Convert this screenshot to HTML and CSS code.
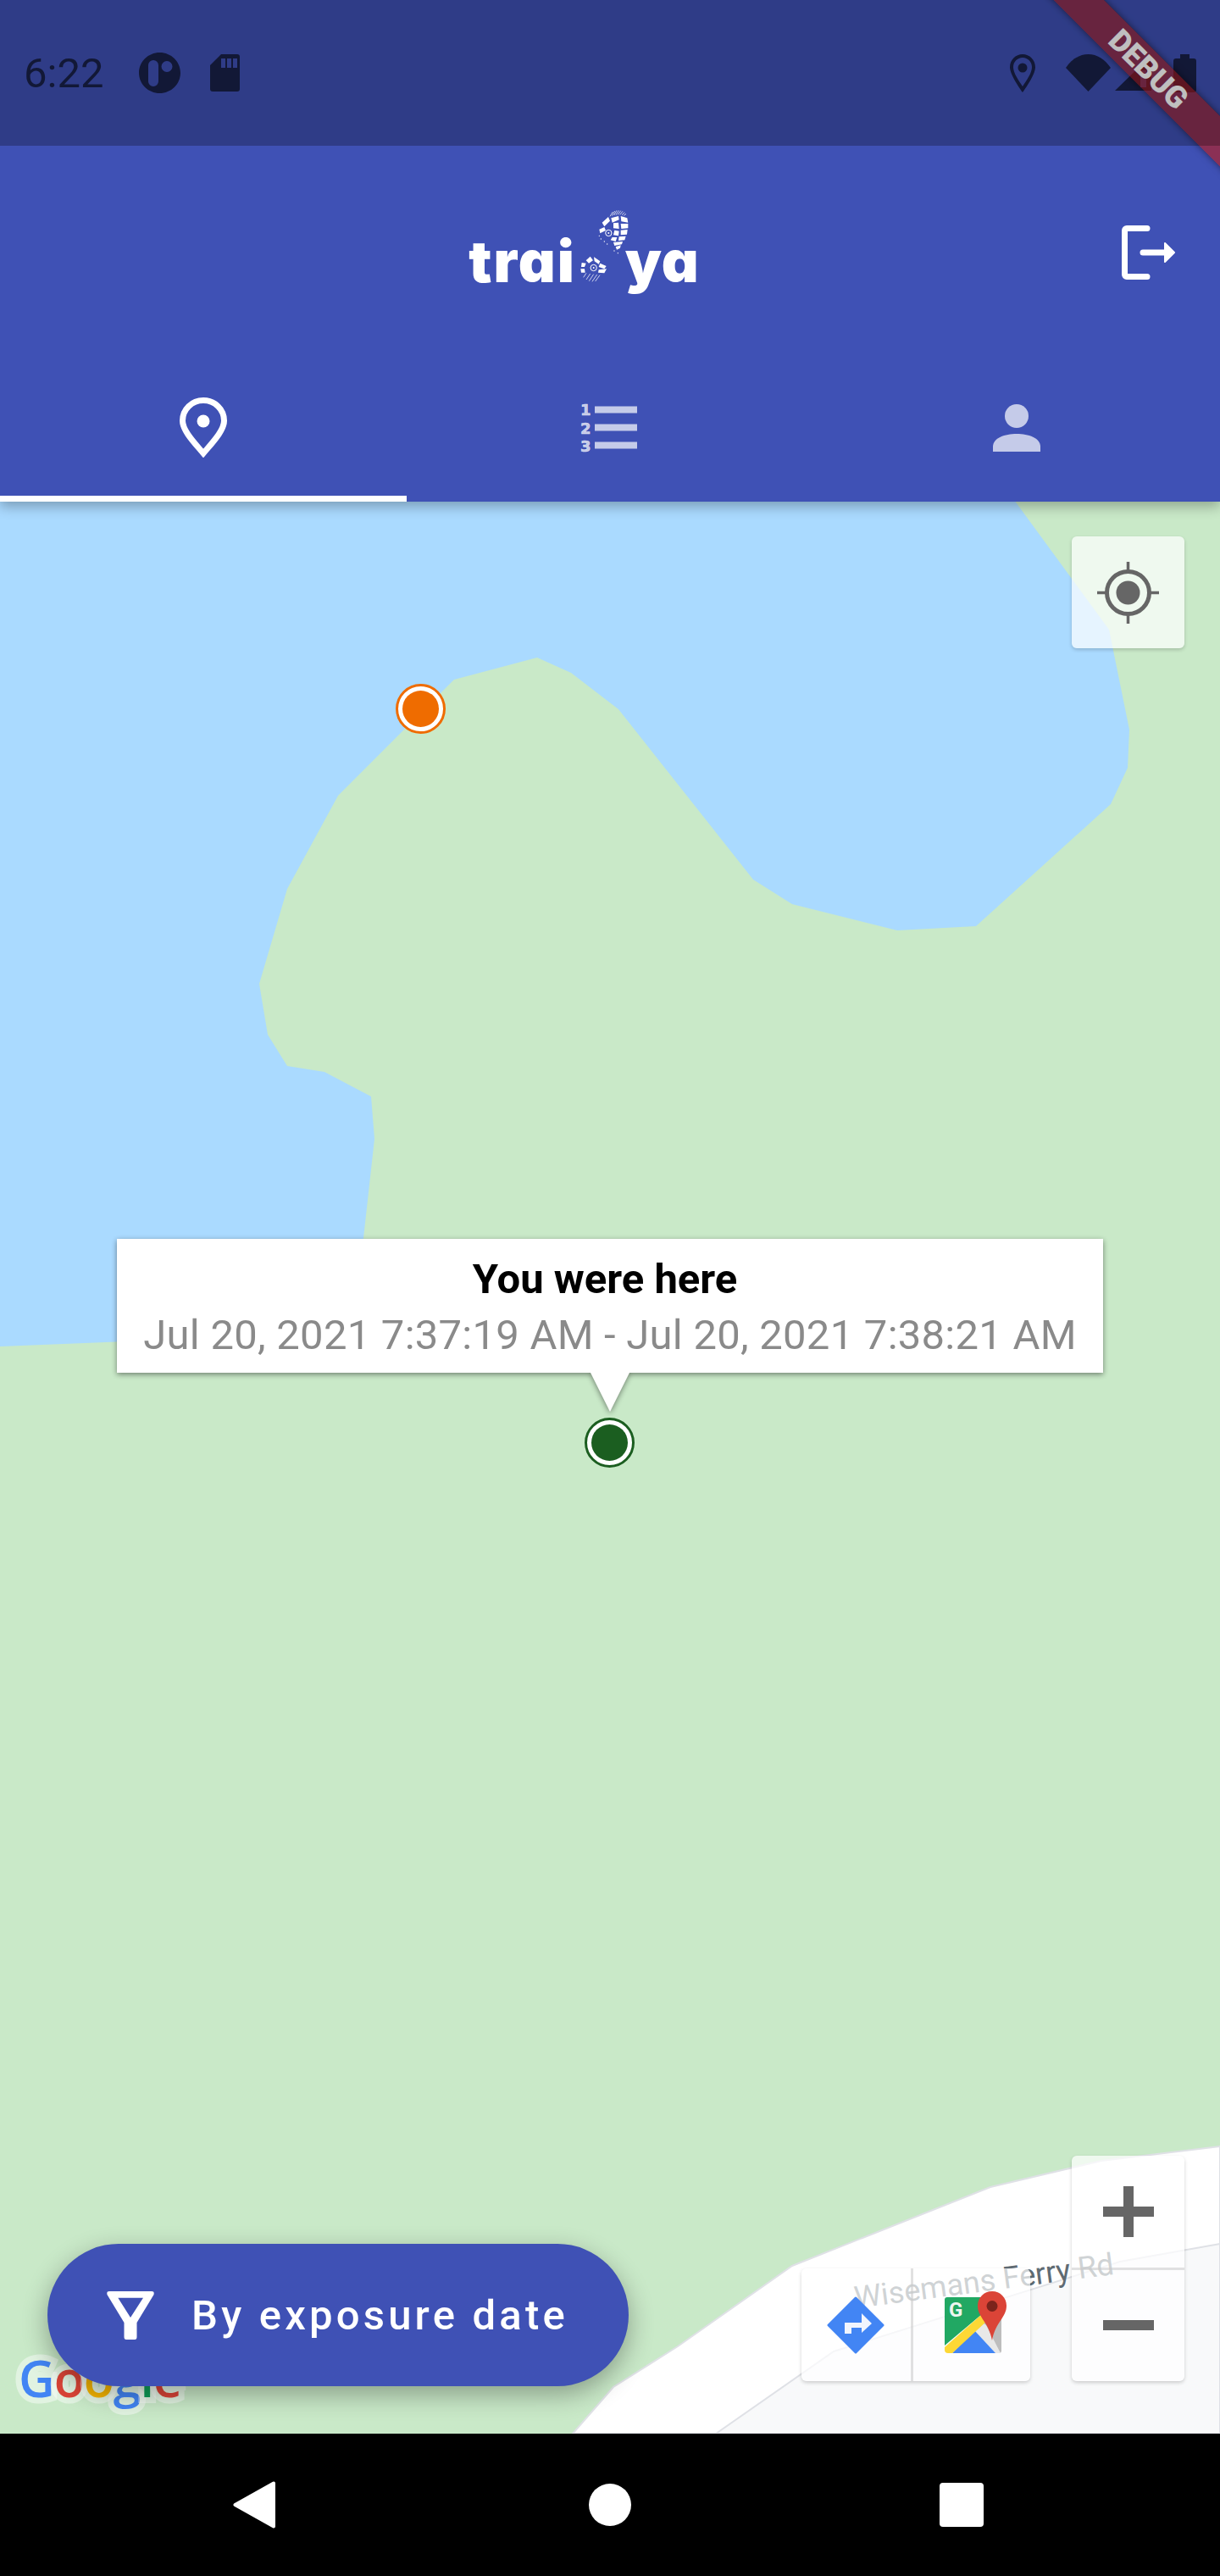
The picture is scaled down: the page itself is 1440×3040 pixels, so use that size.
FILE: index.html
```html
<!DOCTYPE html>
<html lang="en">
<head>
<meta charset="utf-8">
<title>Trailya</title>
<link rel="stylesheet" href="styles.css">
</head>
<body>
<div class="phone">
  <header class="appbar">
    <div class="status">
      <span class="time">6:22</span>
      <svg class="st-app" viewBox="0 0 49 48"><path fill-rule="evenodd" d="M24.500 0C38 0 49 10.700 49 24S38 48 24.500 48 0 37.300 0 24 11 0 24.500 0ZM17 9a6 6 0 0 0-6 6v19a6 6 0 0 0 12 0V15a6 6 0 0 0-6-6ZM33 10a6.500 6.500 0 1 0 0 13 6.500 6.500 0 0 0 0-13Z"/></svg>
      <svg class="st-sd" viewBox="0 0 35 44"><path fill-rule="evenodd" d="M13 0h19a3 3 0 0 1 3 3v38a3 3 0 0 1-3 3H3a3 3 0 0 1-3-3V13ZM13 5v11h5V5ZM20 5v11h5V5ZM27 5v11h5V5Z"/></svg>
      <span class="st-spacer"></span>
      <svg class="st-pin" viewBox="0 0 30 45"><path fill-rule="evenodd" d="M15 0C6.700 0 0 6.800 0 15.200 0 25 15 45 15 45s15-20 15-29.800C30 6.800 23.300 0 15 0Zm0 4c6.100 0 11 5 11 11.200 0 6.800-6 15-11 22.800C10 30.200 4 22 4 15.200 4 9 8.900 4 15 4Z"/><circle cx="15" cy="16" r="5.500"/></svg>
      <svg class="st-wifi" viewBox="0 0 53 44"><path d="M0 16C7 6 16 0 26.500 0S46 6 53 16L26.500 44Z"/></svg>
      <svg class="st-signal" viewBox="0 0 43 42"><path fill-rule="evenodd" d="M43 0V42H0ZM30 18V38H37V18Z"/></svg>
      <svg class="st-batt" viewBox="0 0 27 45"><path d="M8 0h11v5h5a3 3 0 0 1 3 3v34a3 3 0 0 1-3 3H3a3 3 0 0 1-3-3V8a3 3 0 0 1 3-3h5Z"/></svg>
    </div>
    <div class="toolbar">
      <div class="logo">
        <span class="logo-word">trai</span>
        <svg class="logo-prints" viewBox="0 0 58 100" aria-hidden="true">
          <g transform="scale(.3333) translate(-540 -84)" fill="#fff">
            <g stroke="#fff" stroke-width="2.200">
              <path d="M660 106 670 90M667 104 677 87M674 102 684 85M681 101 691 85M688 100 698 86M695 100 705 88M702 101 712 92M709 103 717 97"/>
              <path d="M566 322 576 307M576 330 590 309M586 335 602 311M597 337 614 312M608 336 624 314"/>
            </g>
            <path d="M632 128 654 108 660 122 640 142ZM664 112 690 105 692 118 668 128ZM698 105 721 112 724 128 700 124ZM622 152 640 144 645 156 625 166ZM672 130 690 128 692 150 672 148ZM698 132 724 132 724 148 700 150ZM676 155 692 158 690 175 672 172ZM698 155 722 153 720 170 698 172ZM668 180 685 180 680 195 662 190ZM692 178 716 176 712 190 690 192ZM672 198 705 195 702 205 676 210ZM680 214 698 208 696 218 684 224Z"/>
            <circle cx="622" cy="175" r="2"/><circle cx="628" cy="186" r="2"/><circle cx="640" cy="195" r="2"/><circle cx="650" cy="204" r="2"/><circle cx="675" cy="228" r="2"/><circle cx="688" cy="236" r="2"/>
            <circle cx="655" cy="165" r="11" fill="none" stroke="#fff" stroke-width="3"/><circle cx="655" cy="165" r="3"/>
            <path d="M575 262 590 248 600 262 585 272ZM603 250 625 265 620 275 605 265ZM625 272 647 282 640 292 620 285ZM620 295 648 292 640 307 618 305ZM560 270 575 272 570 285 558 285ZM556 292 570 292 572 305 558 305Z"/>
            <circle cx="602" cy="288" r="11" fill="none" stroke="#fff" stroke-width="3"/><circle cx="602" cy="288" r="3"/>
          </g>
        </svg>
        <span class="logo-word logo-end">ya</span>
      </div>
      <svg class="logout" viewBox="0 0 63 64" fill="none" stroke="#fff" stroke-linecap="round" stroke-linejoin="round">
        <path stroke-width="7" d="M30 3.500H6A2.500 2.500 0 0 0 3.500 6V58A2.500 2.500 0 0 0 6 60.500H30"/>
        <path stroke-width="7" d="M25 32H52"/>
        <path fill="#fff" stroke-width="2" d="M51 21 62 32 51 43Z"/>
      </svg>
    </div>
    <nav class="tabs">
      <div class="tab tab-active">
        <svg class="tab-pin" viewBox="0 0 56 71" fill="none"><path stroke="#fff" stroke-width="7" d="M28 66C17 53 3.500 39 3.500 27.500 3.500 14 14.500 3.500 28 3.500S52.500 14 52.500 27.500C52.500 39 39 53 28 66Z"/><circle cx="28" cy="28" r="7.500" fill="#fff"/></svg>
      </div>
      <div class="tab">
        <svg class="tab-list" viewBox="0 0 67 57">
          <text class="digit" x="0" y="14">1</text><text class="digit" x="0" y="35.500">2</text><text class="digit" x="0" y="57">3</text>
          <path d="M17 3.500h50v8H17ZM17 24.500h50v8H17ZM17 45.500h50v8H17Z"/>
        </svg>
      </div>
      <div class="tab">
        <svg class="tab-person" viewBox="0 0 56 56"><circle cx="28" cy="14" r="14"/><path d="M0 56V50C0 40 14 35 28 35S56 40 56 50V56Z"/></svg>
      </div>
    </nav>
  </header>

  <main class="map">
    <svg class="map-canvas" viewBox="0 592 1440 2280" aria-hidden="true">
      <path class="land" d="M1197 590 1309 743 1333 861 1331 906 1311 949 1152 1093 1059 1098 935 1067 889 1038 730 837 674 794 634 776 536 802 399 939 339 1049 306 1161 316 1221 339 1258 383 1265 438 1294 442 1344 429 1461 420 1572 0 1589V2872H1440V590Z"/>
      <path class="road" d="M676 2872 724 2817 800 2769 935 2674 1169 2581 1300 2550 1440 2533V2872Z"/>
      <path class="lane" d="M845 2872 984 2775 1322 2669 1440 2648V2872Z"/>
    </svg>
    <span class="road-name">Wisemans Ferry Rd</span>

    <span class="marker marker-orange"></span>

    <div class="callout">
      <div class="callout-box">
        <strong class="callout-title">You were here</strong>
        <span class="callout-sub">Jul 20, 2021 7:37:19 AM - Jul 20, 2021 7:38:21 AM</span>
      </div>
      <span class="callout-tail"></span>
    </div>
    <span class="marker marker-green"></span>

    <button class="ctrl locate" type="button">
      <svg viewBox="0 0 73 73" width="73" height="73"><circle cx="36.500" cy="36.500" r="25" fill="none" stroke="#666" stroke-width="5"/><circle cx="36.500" cy="36.500" r="14" fill="#666"/><path stroke="#666" stroke-width="3.500" d="M36.500 0V12M36.500 61V73M0 36.500H12M61 36.500H73"/></svg>
    </button>

    <div class="logo-google"><span class="g-b">G</span><span class="g-r">o</span><span class="g-y">o</span><span class="g-b">g</span><span class="g-g">l</span><span class="g-r">e</span></div>

    <button class="fab" type="button">
      <svg class="fab-icon" viewBox="0 0 56 57"><path fill="#fff" fill-rule="evenodd" d="M3 0H53Q56.500 0 55.500 4L35.500 37V54Q35.500 57 33 57H23Q20.500 57 20.500 54V37L.5 4Q-.5 0 3 0ZM13.300 7.700 28 31 43 7.700Z"/></svg>
      <span class="fab-label">By exposure date</span>
    </button>

    <div class="map-tools">
      <div class="ctrl toolbar-pair">
        <div class="pair-cell">
          <svg viewBox="0 0 68 68" width="68" height="68"><path fill="#4285f4" stroke="#4285f4" stroke-width="3" stroke-linejoin="round" d="M34 2 66 34 34 66 2 34Z"/><path fill="#f1f5fd" d="M21 44V31H41V20L53 32 41 43V37H29V44Z"/></svg>
        </div>
        <div class="pair-cell pair-maps">
          <svg viewBox="0 0 74 73" width="74" height="73">
            <path fill="#bdbdbd" d="M45 7H64a3 3 0 0 1 3 3V70a3 3 0 0 1-3 3H60L40 37Z"/>
            <path fill="#e8e8e8" d="M40 34 49 40 66 73H60L35 46Z"/>
            <path fill="#4285f4" d="M35 46 60 73H9Z"/>
            <path fill="#21a863" d="M3 7H50L44 27 0 64V10A3 3 0 0 1 3 7Z"/>
            <path fill="#fdd835" d="M44 27 51 34 9 73H4A4 4 0 0 1 0 69V66Z"/>
            <text class="maps-g" x="5" y="30">G</text>
            <path fill="#db4437" d="M56 0C65.500 0 73 7.500 73 17 73 31 60 36 56 58 52 36 39 31 39 17 39 7.500 46.500 0 56 0Z"/>
            <circle cx="56" cy="17.500" r="6.500" fill="#7b241c"/>
          </svg>
        </div>
      </div>
      <div class="ctrl zoom-ctrl">
        <div class="zoom-cell"><span class="z-plus"></span></div>
        <div class="zoom-cell"><span class="z-minus"></span></div>
      </div>
    </div>
  </main>

  <footer class="navbar">
    <svg class="nav-back" viewBox="0 0 50 56"><path fill="#fff" stroke="#fff" stroke-width="4" stroke-linejoin="round" d="M2.500 28 48 2.500V53.500Z"/></svg>
    <span class="nav-home"></span>
    <span class="nav-recent"></span>
  </footer>

  <div class="debug-banner"><span>DEBUG</span></div>
  <div class="scrim"></div>
</div>
</body>
</html>
```
FILE: styles.css
```css
* { box-sizing: border-box; }
html, body { margin: 0; padding: 0; background: #000; }
body { font-family: Roboto, "Liberation Sans", sans-serif; }

.phone {
  position: relative;
  width: 1440px;
  height: 3040px;
  overflow: hidden;
  display: flex;
  flex-direction: column;
}

/* App bar */
.appbar {
  position: relative;
  z-index: 2;
  flex: none;
  background: #3f51b5;
  box-shadow: 0 6px 14px rgba(0, 0, 0, .28);
}
.status {
  position: relative;
  z-index: 6;
  height: 172px;
  display: flex;
  align-items: center;
  padding: 0 28px 0 28px;
  color: rgba(0, 0, 0, .6);
}
.status svg { display: block; flex: none; fill: rgba(0, 0, 0, .6); }
.time { font-size: 49px; line-height: 1; margin-right: 42px; }
.st-app { width: 49px; height: 48px; }
.st-sd { width: 35px; height: 44px; margin-left: 35px; }
.st-spacer { flex: 1; }
.st-pin { width: 30px; height: 45px; }
.st-wifi { width: 53px; height: 44px; margin-left: 36px; }
.st-signal { width: 43px; height: 42px; margin-left: 5px; }
.st-batt { width: 27px; height: 45px; margin-left: 26px; }

.toolbar {
  height: 252px;
  display: grid;
  grid-template-columns: 1fr auto 1fr;
  align-items: center;
}
.logo {
  grid-column: 2;
  display: flex;
  align-items: flex-start;
  height: 100px;
  margin-right: 61px;
  color: #fff;
}
.logo-word {
  font-family: Inter, "Open Sans", sans-serif;
  font-weight: 900;
  font-size: 68px;
  line-height: 120px;
  letter-spacing: 2px;
  font-feature-settings: "cv11" 1;
}
.logo-end { letter-spacing: 1px; }
.logo-prints { width: 58px; height: 100px; flex: none; overflow: visible; }
.logout {
  grid-column: 3;
  justify-self: end;
  width: 63px;
  height: 64px;
  margin-right: 53px;
}

.tabs { position: relative; display: flex; height: 168px; }
.tab {
  flex: 1;
  display: flex;
  align-items: center;
  justify-content: center;
  border-bottom: 7px solid transparent;
}
.tab-active { border-bottom-color: #fff; }
.tab-pin { width: 56px; height: 71px; }
.tab-list { width: 67px; height: 57px; overflow: visible; fill: rgba(255, 255, 255, .7); transform: translateX(-2px); }
.digit {
  font-family: "DejaVu Sans", sans-serif;
  font-weight: 700;
  font-size: 18px;
  stroke: rgba(255, 255, 255, .7);
  stroke-width: .6px;
}
.tab-person { width: 56px; height: 56px; fill: rgba(255, 255, 255, .7); }

/* Map */
.map {
  position: relative;
  z-index: 1;
  flex: 1;
  overflow: hidden;
  background: #aadaff;
}
.map-canvas { position: absolute; inset: 0; width: 1440px; height: 2280px; display: block; }
.land { fill: #c9e9c8; }
.road { fill: #fff; stroke: #dfe1e6; stroke-width: 2; }
.lane { fill: #f8f9fa; stroke: #dfe1e6; stroke-width: 2; }
.road-name {
  position: absolute;
  left: 1007px;
  top: 2078px;
  font-size: 36px;
  line-height: 44px;
  color: #5f6b73;
  white-space: nowrap;
  transform: rotate(-7.500deg);
  text-shadow: 0 0 3px #fff;
}

.marker {
  position: absolute;
  width: 59px;
  height: 59px;
  border-radius: 50%;
  border: 3px solid;
  background: #fff;
  display: flex;
  align-items: center;
  justify-content: center;
}
.marker::after { content: ""; width: 43px; height: 43px; border-radius: 50%; background: currentColor; }
.marker-orange { left: 467px; top: 215px; color: #ef6c00; }
.marker-green { left: 690px; top: 1081px; color: #1b5e20; }

.callout {
  position: absolute;
  left: 138px;
  top: 870px;
  width: 1164px;
  filter: drop-shadow(0 2px 3px rgba(0, 0, 0, .45));
}
.callout-box {
  height: 158px;
  background: #fff;
  display: flex;
  flex-direction: column;
  align-items: center;
  justify-content: center;
  gap: 10px;
  padding-top: 6px;
}
.callout-title { font-size: 49px; line-height: 56px; font-weight: 700; color: #000; margin: -2px 12px 0 0; }
.callout-sub { font-size: 49px; line-height: 56px; color: #8a8a8a; white-space: nowrap; letter-spacing: .25px; }
.callout-tail {
  display: block;
  width: 46px;
  height: 46px;
  margin: 0 auto;
  background: #fff;
  clip-path: polygon(0 0, 100% 0, 50% 100%);
}

.ctrl {
  background: rgba(255, 255, 255, .7);
  border: 0;
  padding: 0;
  border-radius: 6px;
  box-shadow: 0 2px 4px rgba(0, 0, 0, .18);
}
.locate {
  position: absolute;
  top: 41px;
  right: 42px;
  width: 133px;
  height: 132px;
  display: flex;
  align-items: center;
  justify-content: center;
}
.locate svg { display: block; }

.logo-google {
  position: absolute;
  left: 22px;
  bottom: 24px;
  font-family: "Open Sans", sans-serif;
  font-weight: 600;
  font-size: 59px;
  line-height: 84px;
  letter-spacing: -1px;
  -webkit-text-stroke: 14px rgba(255, 255, 255, .45);
  paint-order: stroke fill;
}
.g-b { color: #4285f4; }
.g-r { color: #db4437; }
.g-y { color: #f4b400; }
.g-g { color: #0f9d58; }

.fab {
  position: absolute;
  left: 56px;
  bottom: 56px;
  width: 686px;
  height: 168px;
  border: 0;
  border-radius: 84px;
  background: #3f51b5;
  color: #fff;
  display: flex;
  align-items: center;
  gap: 44px;
  padding: 0 0 0 70px;
  box-shadow: 0 10px 30px rgba(0, 0, 0, .32);
  font-family: inherit;
}
.fab-icon { width: 56px; height: 57px; flex: none; }
.fab-label { font-size: 49px; font-weight: 500; letter-spacing: 4.200px; white-space: nowrap; }

.map-tools {
  position: absolute;
  right: 42px;
  bottom: 62px;
  display: flex;
  align-items: flex-end;
  gap: 49px;
}
.toolbar-pair { width: 270px; height: 133px; display: flex; }
.pair-cell { flex: 1; display: flex; align-items: center; justify-content: center; }
.pair-cell svg { display: block; overflow: visible; }
.pair-maps { border-left: 3px solid rgba(200, 200, 200, .55); padding: 0 0 6px 10px; }
.maps-g { font-family: Roboto, sans-serif; font-weight: 700; font-size: 24px; fill: #eef6f0; }
.zoom-ctrl { width: 133px; height: 266px; display: flex; flex-direction: column; }
.zoom-cell { flex: 1; display: flex; align-items: center; justify-content: center; }
.zoom-cell + .zoom-cell { border-top: 3px solid rgba(200, 200, 200, .55); }
.z-plus, .z-minus { position: relative; display: block; width: 60px; height: 60px; }
.z-plus::before, .z-minus::before {
  content: "";
  position: absolute;
  left: 0;
  right: 0;
  top: 24px;
  height: 12px;
  background: #666;
}
.z-plus::after {
  content: "";
  position: absolute;
  top: 0;
  bottom: 0;
  left: 24px;
  width: 12px;
  background: #666;
}

/* Navigation bar */
.navbar {
  position: relative;
  z-index: 3;
  flex: none;
  height: 168px;
  background: #000;
  display: grid;
  grid-template-columns: 600px 240px 600px;
  align-items: center;
  justify-items: center;
}
.nav-back { width: 50px; height: 56px; justify-self: end; margin-right: 275px; }
.nav-home { width: 50px; height: 50px; border-radius: 50%; background: #fff; }
.nav-recent { width: 52px; height: 52px; border-radius: 4px; background: #fff; justify-self: start; margin-left: 269px; }

/* Overlays */
.debug-banner {
  position: absolute;
  z-index: 4;
  top: 0;
  left: 0;
  width: 500px;
  height: 42.400px;
  transform-origin: 0 0;
  transform: translate(1303px, 0) rotate(45deg) translateX(-100px);
  display: flex;
  align-items: center;
  justify-content: center;
  background: rgba(183, 28, 28, .63);
  box-shadow: 0 0 8px rgba(0, 0, 0, .5);
  color: #fff;
  font-family: Roboto, sans-serif;
  font-weight: 900;
  font-size: 36px;
  line-height: 1;
}
.debug-banner span { transform: translateX(-55px); }
.scrim {
  position: absolute;
  z-index: 5;
  inset: 0 0 auto 0;
  height: 172px;
  background: rgba(0, 0, 0, .25);
}
```
